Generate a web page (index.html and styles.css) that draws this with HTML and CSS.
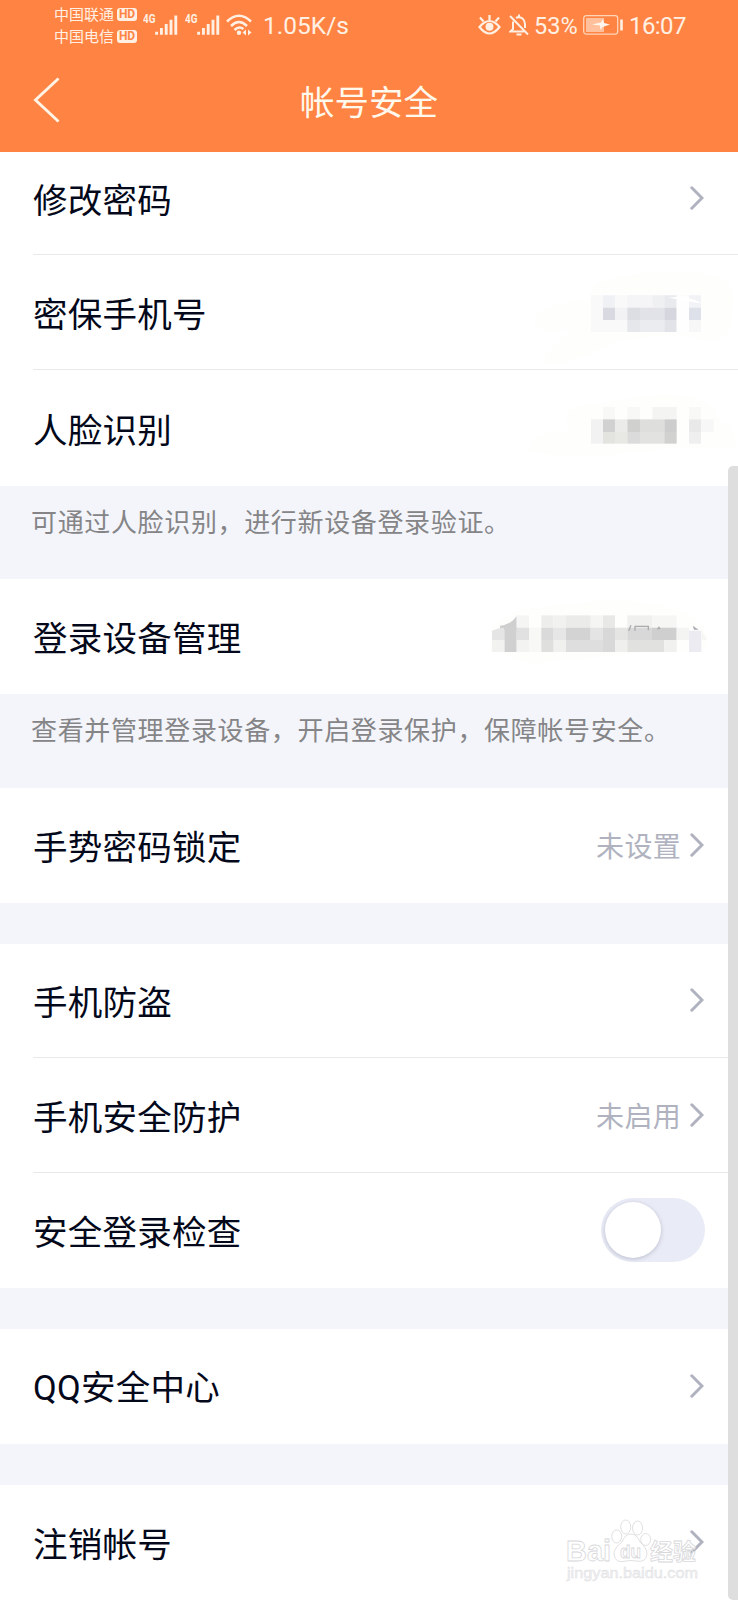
FILE: index.html
```html
<!DOCTYPE html>
<html lang="zh-CN">
<head>
<meta charset="utf-8">
<title>帐号安全</title>
<link rel="stylesheet" href="styles.css">
</head>
<body>
<svg class="defs" width="0" height="0">
  <symbol id="chevron" viewBox="0 0 14 24"><path d="M1.800 1.800 12 12 1.800 22.200" fill="none" stroke="currentColor" stroke-width="3" stroke-linecap="round"/></symbol>
  <symbol id="signal" viewBox="0 0 24 22"><path d="M1.700 18v3.200M6.700 14v7.200M11.700 10v11.200M16.700 5.500v15.700M21.700 1v20.200" stroke="#fff0e3" stroke-width="3" fill="none"/></symbol>
</svg>
<div class="screen">
  <header class="header">
    <div class="status">
      <div class="carriers">
        <div class="carrier">中国联通<span class="hd">HD</span></div>
        <div class="carrier">中国电信<span class="hd">HD</span></div>
      </div>
      <span class="net">4G</span><svg class="signal"><use href="#signal"/></svg>
      <span class="net net-second">4G</span><svg class="signal"><use href="#signal"/></svg>
      <svg class="wifi" viewBox="0 0 26 22"><g fill="none" stroke="#fff0e3" stroke-width="2.500"><path d="M1 7.500Q13-4 25 7.500M5 12Q13 4 21 12M8.500 16Q13 11.500 17.500 15"/></g><circle cx="13" cy="18.800" r="2.200" fill="#fff0e3"/><path d="M20 15.500v6L16.500 18.500zM22 15.500v6L25.500 18.500z" fill="#fff0e3"/></svg>
      <span class="speed">1.05K/s</span>
      <svg class="eye" viewBox="0 0 23 20"><g fill="none" stroke="#fff0e3" stroke-width="2.200"><path d="M1.500 12Q11.500 0 21.500 12Q11.500 25 1.500 12Z"/><path d="M11.500 5V0M5.500 6.500 2 2.500M17.500 6.500 21 2.500"/></g><circle cx="11.500" cy="11.700" r="4" fill="#fff0e3"/></svg>
      <svg class="bell" viewBox="0 0 20 22"><g fill="none" stroke="#fff0e3" stroke-width="2"><path d="M4 7.500V15L1.500 17.500H15M7 4Q10 2 13.500 4.500Q16 6.500 16 10v4M10 3V.500M1 2 19 20.500"/><path d="M7.500 20.500h5"/></g></svg>
      <span class="percent">53%</span>
      <svg class="battery" viewBox="0 0 41 20"><rect x=".7" y=".7" width="34" height="18.400" rx="2.500" fill="none" stroke="#ffd5b8" stroke-width="1.300"/><path d="M3 3h18v14H3z" fill="#ffc09b"/><path d="M9 9.500 18 7.500 20 4 21 8 27 9.500 19.500 12 17.500 15 17 10.500Z" fill="#fff7ef"/><path d="M38.500 4.500v11" stroke="#fff0e3" stroke-width="2.600"/></svg>
      <span class="clock">16:07</span>
    </div>
    <div class="titlebar">
      <svg class="back" viewBox="0 0 28 46"><path d="M25.500 1.500 2.500 23 25.500 44.500" fill="none" stroke="#fff4e6" stroke-width="2.900"/></svg>
      <h1 class="title">帐号安全</h1>
    </div>
  </header>
  <main>
    <section class="group">
      <div class="row row-first"><span class="label">修改密码</span><svg class="chevron"><use href="#chevron"/></svg></div>
      <div class="row"><span class="label">密保手机号</span>
        <svg class="mosaic" viewBox="0 -15 654 345">
          <path d="M38 180Q60 130 210 120Q200 70 300 50Q510 10 620 60Q660 100 630 200Q600 270 540 235Q410 210 250 260Q80 350 72 290L150 210Q60 230 38 180Z" fill="#fefefd"/>
          <path d="M213 106h330v110H213z" fill="#f9f9fa"/>
          <path d="M249 106h36v37h-36z" fill="#f0f1f4"/><path d="M322 106h75v37h-75z" fill="#f5f5f7"/><path d="M397 106h36v37h-36z" fill="#eff0f2"/><path d="M433 106h37v37h-37z" fill="#e9eaee"/>
          <path d="M249 143h36v37h-36z" fill="#d9dae1"/><path d="M285 143h37v37h-37z" fill="#f2f2f4"/><path d="M322 143h38v37h-38z" fill="#dddee3"/><path d="M360 143h73v37h-73z" fill="#e2e3e8"/><path d="M433 143h37v37h-37z" fill="#d5d6de"/>
          <path d="M322 180h38v36h-38z" fill="#e6e7eb"/><path d="M360 180h73v36h-73z" fill="#ebecef"/><path d="M433 180h37v36h-37z" fill="#e2e3e8"/>
          <path d="M470 106h37v110h-37z" fill="#fefefe"/><path d="M507 106h36v37h-36z" fill="#f2f3f6"/><path d="M507 143h36v37h-36z" fill="#dee1ea"/><path d="M507 180h36v36h-36z" fill="#f7f7f8"/>
          <path d="M445 113Q500 105 545 130Q510 125 445 113Z" fill="#fff"/>
        </svg>
      </div>
      <div class="row row-last"><span class="label">人脸识别</span>
        <svg class="mosaic" viewBox="0 330 654 345">
          <path d="M25 570Q30 500 150 510Q120 450 180 435L420 398Q570 400 590 470Q650 500 650 560L420 565L250 585Q100 590 25 570Z" fill="#fefefd"/>
          <path d="M249 438h36v37h-36zM322 438h38v37h-38z" fill="#f8f8f7"/><path d="M397 438h73v37h-73z" fill="#f4f4f3"/><path d="M507 438h36v37h-36z" fill="#f8f8f7"/>
          <path d="M213 475h36v73h-36z" fill="#f2f2f2"/><path d="M249 475h36v38h-36z" fill="#d1d1d1"/><path d="M285 475h37v38h-37z" fill="#ebebe9"/><path d="M322 475h38v38h-38z" fill="#d0d0cf"/><path d="M360 475h73v38h-73z" fill="#dededc"/><path d="M433 475h37v38h-37z" fill="#cdcdcd"/>
          <path d="M249 513h36v35h-36z" fill="#e3e3e0"/><path d="M285 513h37v35h-37z" fill="#e8e8e5"/><path d="M322 513h38v35h-38z" fill="#dbdbdb"/><path d="M360 513h73v35h-73z" fill="#e2e2e1"/><path d="M433 513h37v35h-37z" fill="#d1d1cf"/>
          <path d="M507 475h36v38h-36z" fill="#e9e9ea"/><path d="M507 513h36v35h-36z" fill="#efeff0"/><path d="M543 475h38v38h-38z" fill="#f7f7f7"/>
        </svg>
      </div>
    </section>
    <p class="hint">可通过人脸识别，进行新设备登录验证。</p>
    <section class="group"><div class="row"><span class="label">登录设备管理</span>
      <svg class="mosaic mosaic-wide" viewBox="0 -33 804 345">
        <path d="M60 110L140 60L400 30Q600 30 680 90Q730 130 700 180L500 190L200 220Q120 215 100 190L60 185Z" fill="#fefefd"/>
        <path d="M90 107Q115 104 130 90L140 78V120H90Z" fill="#cfcfcf"/>
        <path d="M140 76h37v37h-37z" fill="#f5f5f3"/><path d="M214 76h37v37h-37z" fill="#ededeb"/><path d="M251 76h37v37h-37z" fill="#f1f1ef"/><path d="M288 76h74v37h-74z" fill="#ebebe9"/><path d="M362 76h37v37h-37z" fill="#f5f5f4"/><path d="M399 76h36v37h-36z" fill="#e8e8e7"/><path d="M472 76h74v37h-74z" fill="#f0f0ef"/><path d="M546 76h74v37h-74z" fill="#f6f6f5"/>
        <path d="M66 122Q85 113 103 113V150H66z" fill="#e5e5e5"/><path d="M103 113h37v73h-37z" fill="#d0d0d0"/><path d="M140 113h37v37h-37z" fill="#e1e1e1"/><path d="M177 113h37v73h-37z" fill="#f8f8f7"/><path d="M214 113h37v37h-37z" fill="#dadada"/><path d="M251 113h37v37h-37z" fill="#e6e6e6"/><path d="M288 113h74v37h-74z" fill="#d3d3d3"/><path d="M362 113h37v37h-37z" fill="#e4e4e4"/><path d="M399 113h36v73h-36z" fill="#d8d8d8"/><path d="M435 113h37v37h-37z" fill="#e5e5e4"/><path d="M472 113h74v37h-74z" fill="#d8d8d8"/><path d="M546 113h74v37h-74z" fill="#cfcfcf"/><path d="M620 113h37v37h-37z" fill="#f4f4f3"/>
        <path d="M66 150h37v36H66z" fill="#f2f2f1"/><path d="M140 150h37v36h-37z" fill="#f3f3f1"/><path d="M214 150h37v36h-37z" fill="#dfdfde"/><path d="M251 150h37v36h-37z" fill="#f0f0ee"/><path d="M288 150h111v36H288z" fill="#dedede"/><path d="M435 150h37v36h-37z" fill="#efefed"/><path d="M472 150h111v36H472z" fill="#e1e1e0"/><path d="M583 150h37v36h-37z" fill="#f1f1f0"/><path d="M657 122h37v64h-37z" fill="#ebebf1"/><path d="M694 120l18 30h-18z" fill="#f7f7f5"/>
        <path d="M483 106l-7 16M495 122v-13h40v12M562 118l5-6 3 5" fill="none" stroke="#aaaaac" stroke-width="4"/><path d="M668 107l18 12H672z" fill="#aaaab0"/>
      </svg></div>
    </section>
    <p class="hint hint-tall">查看并管理登录设备，开启登录保护，保障帐号安全。</p>
    <section class="group"><div class="row"><span class="label">手势密码锁定</span><span class="value">未设置</span><svg class="chevron"><use href="#chevron"/></svg></div></section>
    <section class="group spaced">
      <div class="row"><span class="label">手机防盗</span><svg class="chevron"><use href="#chevron"/></svg></div>
      <div class="row"><span class="label">手机安全防护</span><span class="value">未启用</span><svg class="chevron"><use href="#chevron"/></svg></div>
      <div class="row row-switch"><span class="label">安全登录检查</span><span class="switch"><span class="knob"></span></span></div>
    </section>
    <section class="group spaced"><div class="row"><span class="label"><span class="latin">QQ</span>安全中心</span><svg class="chevron"><use href="#chevron"/></svg></div></section>
    <section class="group spaced"><div class="row"><span class="label">注销帐号</span><svg class="chevron"><use href="#chevron"/></svg></div></section>
  </main>
  <div class="scrollbar"></div>
  <svg class="watermark" viewBox="0 0 140 70">
    <g fill="#fff" fill-opacity=".75" stroke="#d8d8db" stroke-width=".8">
      <text class="wm-brand" x="0" y="45" textLength="45" lengthAdjust="spacingAndGlyphs">Bai</text>
      <ellipse cx="50.700" cy="20.500" rx="5" ry="6.500"/><ellipse cx="59.700" cy="11" rx="5" ry="7"/><ellipse cx="71.500" cy="12" rx="5" ry="7"/><ellipse cx="79.700" cy="23.500" rx="5" ry="6"/>
      <path d="M65 18Q71 18 74 26Q81 32 81 38Q80 47 70 45Q65 44 60 45Q49 48 48 38Q48 32 56 26Q59 18 65 18Z"/>
      <text class="wm-du" x="54" y="42" textLength="21" lengthAdjust="spacingAndGlyphs">du</text>
      <text class="wm-cn" x="84" y="43.500" textLength="46">经验</text>
    </g>
    <text class="wm-url" x="1" y="62" textLength="131" lengthAdjust="spacingAndGlyphs">jingyan.baidu.com</text>
  </svg>
</div>
</body>
</html>
```
FILE: styles.css
```css
* { box-sizing: border-box; }
body { margin: 0; background: #f4f5fa; font-family: "Noto Sans CJK SC", sans-serif; }
.defs { position: absolute; }
.screen { position: relative; width: 738px; height: 1600px; overflow: hidden; }

.header { height: 152px; background: #ff8444; color: #fff0e3; }
.status { display: flex; align-items: center; height: 50px; padding-left: 54px; font-family: Roboto, sans-serif; white-space: nowrap; }
.carriers { display: grid; width: 89px; }
.carrier { display: flex; align-items: center; gap: 3px; height: 22px; font: 15px/22px "Noto Sans CJK SC", sans-serif; }
.hd { width: 20px; height: 13px; border-radius: 3px; background: #fff0e3; color: #ff8444; font: bold 12px/13.5px Roboto, sans-serif; text-align: center; }
.net { width: 12px; height: 24px; font: bold 12px/12px Roboto, sans-serif; transform: scaleX(.82); transform-origin: left; }
.net-second { margin-left: 7px; }
.signal { width: 23px; height: 22px; }
.wifi { width: 26px; height: 22px; margin-left: 6px; }
.speed { width: 215px; margin: 2px 0 0 11px; font-size: 24.5px; line-height: 30px; }
.eye { width: 23px; height: 20px; }
.bell { width: 20px; height: 22px; margin-left: 8px; }
.percent { width: 49px; margin: 2px 0 0 5px; font-size: 23.5px; line-height: 30px; }
.battery { width: 41px; height: 20px; }
.clock { margin: 2px 0 0 5px; font-size: 24px; line-height: 30px; letter-spacing: -.6px; }

.titlebar { display: grid; grid-template-columns: 100px 1fr 100px; align-items: center; height: 100px; }
.back { width: 28px; height: 46px; margin-left: 33px; }
.title { margin: -1px 0 0; font-size: 34.5px; line-height: 50px; font-weight: 400; text-align: center; color: #fff8ec; }

.group { background: #fff; }
.spaced { margin-top: 41px; }
.row { position: relative; display: flex; align-items: center; height: 115px; padding-right: 34px; margin-left: 33px; }
.row + .row { border-top: 1px solid #e9e9eb; }
.row-first { height: 102px; padding-bottom: 9px; }
.row-last { height: 117px; }
.spaced .row:first-child:not(:last-child) { height: 113px; }
.row-switch { height: 116px; }
.label { flex: 1; margin-top: -1px; font-size: 34.5px; line-height: 50px; letter-spacing: .25px; color: #03081a; }
.latin { font-family: Roboto, sans-serif; }
.value { margin: -1px 9px 0 0; font-size: 28px; line-height: 40px; letter-spacing: .3px; color: #b0b3bf; }
.chevron { width: 14px; height: 24px; margin-top: -1px; color: #b0b3bf; }
.hint { height: 93px; margin: 0; padding: 16px 31px 0; font-size: 26px; line-height: 38px; letter-spacing: .65px; color: #858588; white-space: nowrap; }
.hint-tall { height: 94px; }
.mosaic { width: 218px; height: 115px; margin-right: -34px; }
.mosaic-wide { width: 268px; }

.switch { width: 104px; height: 64px; margin: -2px -1px 0 0; padding: 4px; border-radius: 32px; background: #e9ebf6; }
.knob { display: block; width: 56px; height: 56px; border-radius: 50%; background: #fff; box-shadow: 0 1px 4px #b9bccb; }

.scrollbar { position: absolute; top: 466px; right: 0; width: 10px; height: 1134px; border-radius: 5px 0 0 5px; background: #dedede; }
.watermark { position: absolute; left: 566px; top: 1516px; width: 140px; height: 70px; }
.wm-brand { font: bold 29px "Liberation Sans", sans-serif; }
.wm-du { font: bold 18px "Liberation Sans", sans-serif; }
.wm-cn { font: bold 23px "Noto Sans CJK SC", sans-serif; }
.wm-url { font: 14.5px "Liberation Sans", sans-serif; fill: #f2f2f3; stroke: #dcdcdf; stroke-width: .4; }
```
